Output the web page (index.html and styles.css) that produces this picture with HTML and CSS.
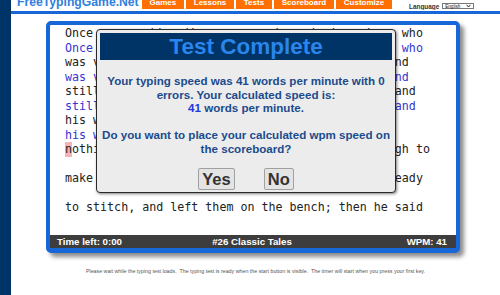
FILE: index.html
```html
<!DOCTYPE html>
<html lang="en">
<head>
  <meta charset="UTF-8">
  <meta name="viewport" content="width=device-width, initial-scale=1.0">
  <title>FreeTypingGame.Net - Typing Test</title>
  <link rel="stylesheet" href="styles.css">
</head>
<body>
  <div class="page">
    <div class="side"></div>
    <div class="main">
      <div class="topbar">
        <div class="logo">FreeTypingGame.Net</div>
        <nav class="tabs">
          <a href="#">Games</a>
          <a href="#">Lessons</a>
          <a href="#">Tests</a>
          <a href="#">Scoreboard</a>
          <a href="#">Customize</a>
        </nav>
        <div class="lang">
          <span>Language</span>
          <span class="lang-select">English
            <svg width="5" height="4" viewBox="0 0 5 4"><path d="M0.6 0.8 L2.5 3 L4.4 0.8" fill="none" stroke="#222" stroke-width="1"/></svg>
          </span>
        </div>
      </div>
      <div class="rule"></div>

      <div class="test-box">
        <div class="text-area">
          <div class="row">Once upon a time there was an honest shoemaker, who</div>
          <div class="row typed">Once upon a time there was an honest shoemaker, who</div>
          <div class="row">was very poor. He worked very hard every day, and</div>
          <div class="row typed">was very poor. He worked very hard every day, and</div>
          <div class="row">still he could never earn enough to live upon, and</div>
          <div class="row typed">still he could never earn enough to live upon, and</div>
          <div class="row">his wife. Soon, the poor shoemaker had almost</div>
          <div class="row typed">his wife. Soon, the poor shoemaker had almost</div>
          <div class="row"><span class="cur">n</span>othing left except leather which was just enough to</div>
          <div class="row typed"></div>
          <div class="row">make one pair of shoes. Then he cut them out, ready</div>
          <div class="row typed"></div>
          <div class="row">to stitch, and left them on the bench; then he said</div>
        </div>
        <div class="status">
          <span class="status-left">Time left: 0:00</span>
          <span class="status-mid">#26 Classic Tales</span>
          <span class="status-right">WPM: 41</span>
        </div>

        <div class="modal">
          <div class="modal-title">Test Complete</div>
          <div class="modal-body">
            <p>Your typing speed was 41 words per minute with 0<br>errors. Your calculated speed is:<br><span class="wpm">41</span> words per minute.</p>
            <p>Do you want to place your calculated wpm speed on<br>the scoreboard?</p>
          </div>
          <div class="modal-actions">
            <button class="btn">Yes</button>
            <button class="btn">No</button>
          </div>
        </div>
      </div>

      <p class="note">Please wait while the typing test loads.  The typing test is ready when the start button is visible.  The timer will start when you press your first key.</p>
    </div>
  </div>
</body>
</html>
```

FILE: styles.css
```css
html, body {
  overflow: hidden;
}
body {
  margin: 0;
  background-color: #ffffff;
  font-family: "Liberation Sans", Arial, sans-serif;
}
.page {
  display: flex;
  min-height: 295px;
}
.side {
  flex: none;
  width: 11px;
  background-color: #003366;
}
.main {
  flex: 1;
  min-width: 0;
}

/* top navigation */
.topbar {
  display: flex;
  align-items: flex-start;
  height: 10px;
  overflow: hidden;
}
.logo {
  margin: -4px 0 0 6px;
  font-size: 12.2px;
  line-height: 13.6px;
  font-weight: bold;
  color: #2f80dc;
  white-space: nowrap;
}
.tabs {
  display: flex;
  gap: 2px;
  margin-left: 3px;
}
.tabs a {
  display: block;
  height: 9px;
  padding: 0 7.8px;
  background-color: #ff7000;
  color: #ffffff;
  font-size: 8px;
  line-height: 6.5px;
  font-weight: bold;
  text-decoration: none;
  white-space: nowrap;
}
.lang {
  display: flex;
  align-items: center;
  gap: 3px;
  margin: 2.5px 0 0 17px;
  font-size: 6.4px;
  font-weight: bold;
  color: #333;
}
.lang-select {
  display: flex;
  align-items: center;
  justify-content: space-between;
  box-sizing: border-box;
  width: 32px;
  height: 6.5px;
  padding: 0 2px;
  border: 1px solid #777;
  background-color: #fff;
  font-size: 4.6px;
  font-weight: normal;
  color: #222;
}
.rule {
  height: 3px;
  margin-top: 1px;
  background-color: #1767d9;
}

/* typing test box */
.test-box {
  position: relative;
  box-sizing: border-box;
  width: 414px;
  margin: 7px 0 0 35px;
  border: 4px solid #1767d9;
  border-bottom-width: 5px;
  border-radius: 5px;
  background-color: #ffffff;
  box-shadow: 4px 4px 4px rgba(0,0,0,0.45);
}
.text-area {
  box-sizing: border-box;
  height: 210px;
  padding: 1px 0 0 15px;
  overflow: hidden;
  font-family: "DejaVu Sans Mono", monospace;
  font-size: 11.66px;
  color: #222;
}
.row {
  height: 14.5px;
  line-height: 14.5px;
  white-space: pre;
}
.row.typed {
  color: #3535d0;
}
.cur {
  display: inline-block;
  background-color: #f5b3b6;
}
.status {
  display: grid;
  grid-template-columns: 1fr auto 1fr;
  height: 13px;
  padding: 0 9px 0 7px;
  background-color: #3d3d3d;
  color: #ffffff;
  font-size: 9.7px;
  line-height: 13px;
  font-weight: bold;
}
.status-right {
  text-align: right;
}

/* result dialog */
.modal {
  position: absolute;
  left: 46px;
  top: 4px;
  box-sizing: border-box;
  width: 300px;
  height: 164px;
  padding: 3px;
  border: 1px solid #2a2a2a;
  border-radius: 4px;
  background-color: #ececec;
  box-shadow: 1px 1px 3px rgba(0,0,0,0.5);
  text-align: center;
}
.modal-title {
  height: 27px;
  background-color: #003366;
  color: #2a86ec;
  font-size: 22.5px;
  line-height: 27px;
  font-weight: bold;
}
.modal-body {
  margin-top: 14px;
  color: #1b4b8c;
  font-size: 11.6px;
  line-height: 13.5px;
  font-weight: bold;
}
.modal-body p {
  margin: 0;
}
.modal-body p + p {
  margin-top: 13.5px;
}
.wpm {
  color: #2236dc;
}
.modal-actions {
  display: flex;
  justify-content: center;
  gap: 29px;
  margin-top: 13px;
}
.btn {
  height: 22px;
  padding: 0 3px;
  border: 1px solid #a0a0a0;
  border-radius: 2px;
  background-color: #e4e4e4;
  color: #333;
  font-family: "Liberation Sans", Arial, sans-serif;
  font-size: 16.5px;
  line-height: 20px;
  font-weight: bold;
}

.note {
  margin: 15px 0 0;
  font-size: 5.3px;
  line-height: 6px;
  color: #555;
  text-align: center;
  white-space: pre;
}
```
